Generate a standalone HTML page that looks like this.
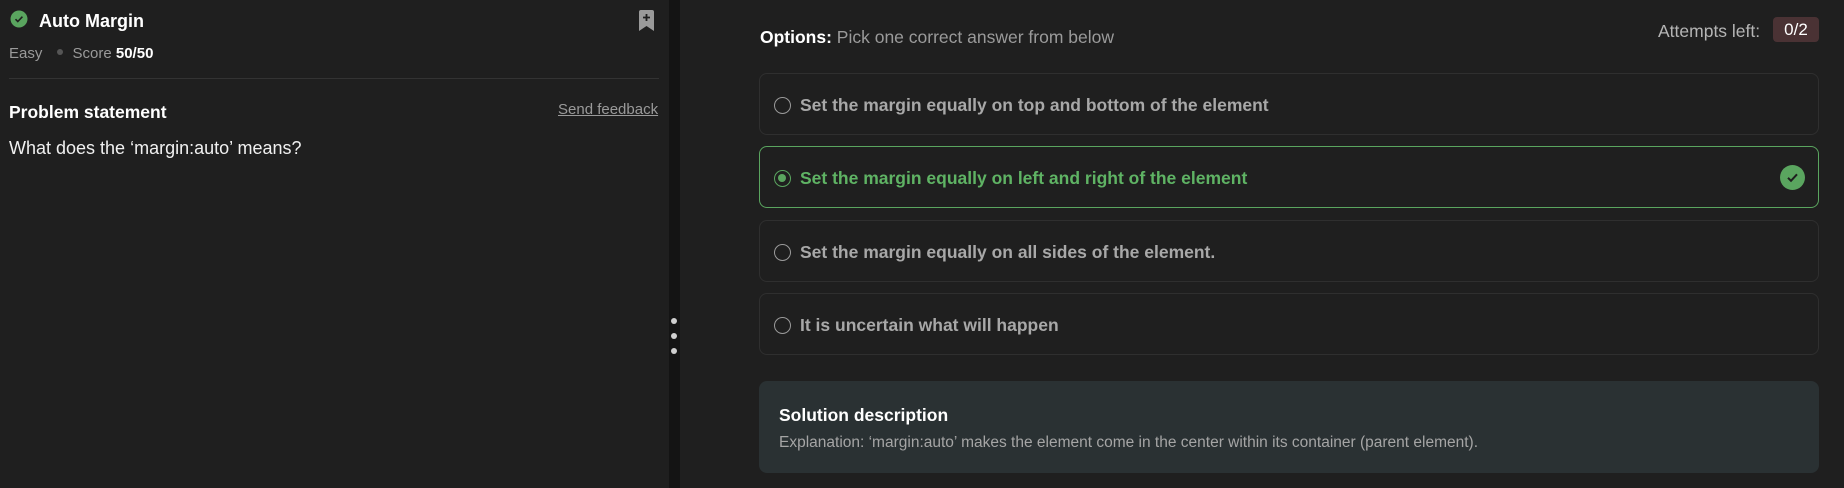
<!DOCTYPE html>
<html><head><meta charset="utf-8"><style>
*{box-sizing:border-box;margin:0;padding:0}
body{width:1844px;height:488px;background:#1f1f1f;font-family:"Liberation Sans",sans-serif;color:#fff;position:relative;overflow:hidden}
.abs{position:absolute}
.left{left:0;top:0;width:669px;height:488px;background:#1f1f1f}
.sep{left:669px;top:0;width:11px;height:488px;background:#141414}
.dot{width:6px;height:6px;border-radius:3px;background:#cfcfcf;left:671px}
.opt{left:759px;width:1060px;height:62px;border:1px solid #2f2f2f;border-radius:8px}
.opt .r{position:absolute;left:14px;top:23px;width:17px;height:17px;border:1.5px solid #9a9a9a;border-radius:50%}
.opt .t{position:absolute;left:40px;top:21px;font-size:17.5px;font-weight:bold;color:#a8a8a8}
</style></head><body>
<div class="abs left"></div>
<div class="abs sep"></div>
<div class="abs dot" style="top:318px"></div>
<div class="abs dot" style="top:333px"></div>
<div class="abs dot" style="top:348px"></div>

<svg class="abs" style="left:10px;top:10px" width="18" height="18" viewBox="0 0 18 18"><circle cx="9" cy="9" r="8.5" fill="#5aa55f"/><path d="M5.5 9.2l2.3 2.3 4.6-4.8" stroke="#1f1f1f" stroke-width="1.6" fill="none"/></svg>
<div class="abs" style="left:39px;top:11px;font-size:18px;font-weight:bold">Auto Margin</div>
<svg class="abs" style="left:638px;top:10px" width="17" height="21" viewBox="0 0 17 21"><path d="M1 2a2 2 0 0 1 2-2h11a2 2 0 0 1 2 2v19l-7.5-5L1 21z" fill="#9a9a9a"/><path d="M8.5 4v7M5 7.5h7" stroke="#1f1f1f" stroke-width="1.8"/></svg>
<div class="abs" style="left:9px;top:45px;font-size:15px;color:#9a9a9a">Easy <span style="display:inline-block;width:6px;height:6px;border-radius:3px;background:#555;margin:0 10px 3px 10px"></span>Score <b style="color:#fff">50/50</b></div>
<div class="abs" style="left:9px;top:78px;width:650px;height:1px;background:#333"></div>
<div class="abs" style="left:9px;top:102px;font-size:17.5px;font-weight:bold">Problem statement</div>
<div class="abs" style="left:558px;top:101px;font-size:15px;color:#9a9a9a;text-decoration:underline">Send feedback</div>
<div class="abs" style="left:9px;top:138px;font-size:18px;color:#f0f0f0">What does the ‘margin:auto’ means?</div>

<div class="abs" style="left:760px;top:27px;font-size:17.5px;color:#9a9a9a"><b style="color:#fff">Options:</b> Pick one correct answer from below</div>
<div class="abs" style="left:1658px;top:21px;font-size:17.5px;color:#b5b5b5">Attempts left:</div>
<div class="abs" style="left:1773px;top:17px;width:46px;height:25px;background:#4a3234;border-radius:4px;font-size:17px;color:#fff;text-align:center;line-height:25px">0/2</div>

<div class="abs opt" style="top:73px"><div class="r"></div><div class="t">Set the margin equally on top and bottom of the element</div></div>
<div class="abs opt" style="top:146px;border-color:#5aa55f"><div class="r" style="border-color:#5aa55f"><div style="position:absolute;left:3px;top:3px;width:8px;height:8px;border-radius:50%;background:#5aa55f"></div></div><div class="t" style="color:#5fb364">Set the margin equally on left and right of the element</div>
<svg style="position:absolute;left:1020px;top:18px" width="25" height="25" viewBox="0 0 25 25"><circle cx="12.5" cy="12.5" r="12.5" fill="#5aa55f"/><path d="M8 12.8l3 3 6-6.5" stroke="#1f1f1f" stroke-width="2" fill="none"/></svg></div>
<div class="abs opt" style="top:220px"><div class="r"></div><div class="t">Set the margin equally on all sides of the element.</div></div>
<div class="abs opt" style="top:293px"><div class="r"></div><div class="t">It is uncertain what will happen</div></div>

<div class="abs" style="left:759px;top:381px;width:1060px;height:92px;background:#2a3133;border-radius:8px"></div>
<div class="abs" style="left:779px;top:405px;font-size:17.5px;font-weight:bold">Solution description</div>
<div class="abs" style="left:779px;top:434px;font-size:15.5px;color:#a5a5a5">Explanation: ‘margin:auto’ makes the element come in the center within its container (parent element).</div>
</body></html>
